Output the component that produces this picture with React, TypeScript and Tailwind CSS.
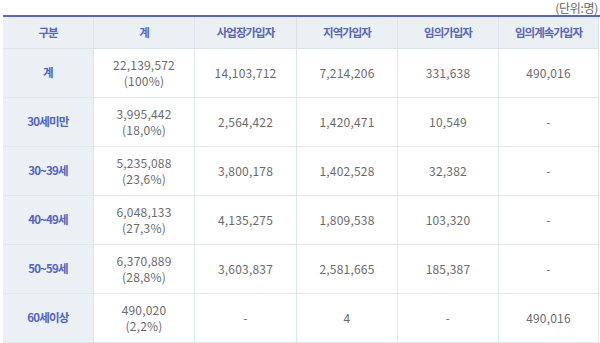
import React from "react";

const rows: { label: string; total: string; pct: string; cols: string[] }[] = [
  { label: "계", total: "22,139,572", pct: "(100%)", cols: ["14,103,712", "7,214,206", "331,638", "490,016"] },
  { label: "30세미만", total: "3,995,442", pct: "(18,0%)", cols: ["2,564,422", "1,420,471", "10,549", "-"] },
  { label: "30~39세", total: "5,235,088", pct: "(23,6%)", cols: ["3,800,178", "1,402,528", "32,382", "-"] },
  { label: "40~49세", total: "6,048,133", pct: "(27,3%)", cols: ["4,135,275", "1,809,538", "103,320", "-"] },
  { label: "50~59세", total: "6,370,889", pct: "(28,8%)", cols: ["3,603,837", "2,581,665", "185,387", "-"] },
  { label: "60세이상", total: "490,020", pct: "(2,2%)", cols: ["-", "4", "-", "490,016"] },
];

const headers = ["구분", "계", "사업장가입자", "지역가입자", "임의가입자", "임의계속가입자"];

export default function App() {
  return (
    <div
      className="w-[600px] h-[343px] overflow-hidden bg-white pl-[3px]"
      style={{ fontFamily: '"Noto Sans CJK KR", "Noto Sans", sans-serif' }}
    >
      <div className="h-[15px] text-right pr-[2px] text-[12px] leading-[15px] text-[#666] tracking-[-0.3px]">
        (단위:명)
      </div>
      <div className="grid grid-cols-[90px_101px_102px_101px_101px_101px] border-t-2 border-[#4f66d6]">
        {headers.map((h, i) => (
          <div
            key={h}
            className={`h-[32px] flex items-center justify-center bg-[#ebf0f5] border-b border-[#dbe4ed] text-[11.5px] tracking-[-1px] font-semibold text-[#5767b8] ${
              i > 0 ? "border-l" : ""
            } ${i === 5 ? "border-r" : ""}`}
          >
            {h}
          </div>
        ))}
        {rows.map((r) => (
          <React.Fragment key={r.label}>
            <div className="h-[49px] flex items-center justify-center bg-[#ebf0f5] border-b border-[#dfe7ef] text-[11.5px] tracking-[-0.8px] font-semibold text-[#5262c2]">
              {r.label}
            </div>
            <div className="h-[49px] flex flex-col items-center justify-center border-b border-l border-[#dfe7ef] text-[12px] leading-[16px] text-[#6a6a6a] tracking-[0.2px]">
              <span>{r.total}</span>
              <span>{r.pct}</span>
            </div>
            {r.cols.map((c, j) => (
              <div
                key={j}
                className={`h-[49px] flex items-center justify-center border-b border-l border-[#dfe7ef] text-[12px] text-[#6a6a6a] tracking-[0.2px] ${
                  j === 3 ? "border-r" : ""
                }`}
              >
                {c}
              </div>
            ))}
          </React.Fragment>
        ))}
      </div>
    </div>
  );
}
